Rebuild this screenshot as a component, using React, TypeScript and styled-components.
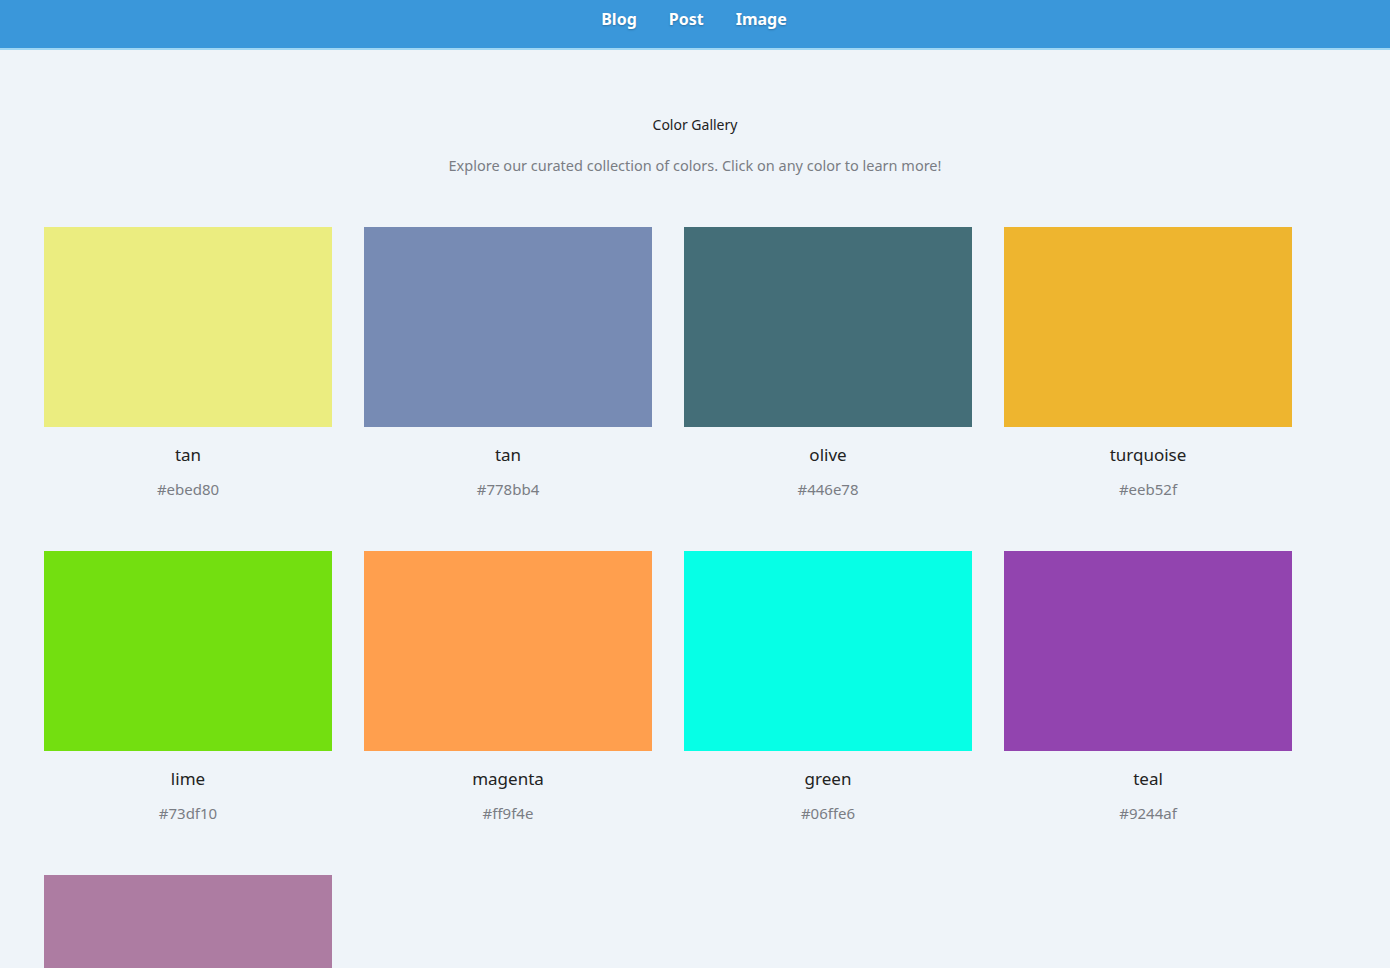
import React from "react";
import styled, { createGlobalStyle } from "styled-components";

const Global = createGlobalStyle`
  html, body { margin: 0; padding: 0; background: #eff4f9; }
  body { font-family: "Noto Sans", "Open Sans", sans-serif; overflow: hidden; }
`;

const Header = styled.header`
  height: 48px;
  background: #3a97da;
  border-bottom: 2px solid #9fd6f3;
  display: flex;
  justify-content: center;
  align-items: flex-start;
`;

const Nav = styled.nav`
  display: flex;
  gap: 32px;
  padding-top: 8px;
  margin-left: -2px;
`;

const NavLink = styled.a`
  color: #ffffff;
  font-weight: 700;
  font-size: 16px;
  line-height: 22px;
  text-decoration: none;
  text-shadow: 0 1px 2px rgba(0, 0, 0, 0.25);
`;

const Main = styled.main`
  padding: 64px 44px 0;
`;

const Title = styled.h1`
  margin: 0;
  text-align: center;
  font-size: 14px;
  font-weight: 400;
  color: #222;
  line-height: 22px;
`;

const Subtitle = styled.p`
  margin: 18px 0 0;
  text-align: center;
  font-size: 14.5px;
  color: #7a7d84;
  line-height: 22px;
`;

const Grid = styled.div`
  margin-top: 51px;
  display: grid;
  grid-template-columns: repeat(4, 288px);
  column-gap: 32px;
  row-gap: 32px;
`;

const Card = styled.div`
  display: flex;
  flex-direction: column;
  align-items: center;
  cursor: pointer;
`;

const Swatch = styled.div<{ $c: string }>`
  width: 288px;
  height: 200px;
  background: ${(p) => p.$c};
`;

const Name = styled.div`
  margin-top: 16px;
  font-size: 17px;
  color: #222;
  line-height: 24px;
`;

const Hex = styled.div`
  margin-top: 12px;
  font-size: 15px;
  color: #7a7d84;
  line-height: 20px;
  padding-bottom: 20px;
`;

const colors = [
  { name: "tan", hex: "#ebed80" },
  { name: "tan", hex: "#778bb4" },
  { name: "olive", hex: "#446e78" },
  { name: "turquoise", hex: "#eeb52f" },
  { name: "lime", hex: "#73df10" },
  { name: "magenta", hex: "#ff9f4e" },
  { name: "green", hex: "#06ffe6" },
  { name: "teal", hex: "#9244af" },
  { name: "mauve", hex: "#ad7ca2" },
];

export default function App() {
  return (
    <>
      <Global />
      <Header>
        <Nav>
          <NavLink href="#">Blog</NavLink>
          <NavLink href="#">Post</NavLink>
          <NavLink href="#">Image</NavLink>
        </Nav>
      </Header>
      <Main>
        <Title>Color Gallery</Title>
        <Subtitle>
          Explore our curated collection of colors. Click on any color to learn more!
        </Subtitle>
        <Grid>
          {colors.map((c, i) => (
            <Card key={i}>
              <Swatch $c={c.hex} />
              <Name>{c.name}</Name>
              <Hex>{c.hex}</Hex>
            </Card>
          ))}
        </Grid>
      </Main>
    </>
  );
}
